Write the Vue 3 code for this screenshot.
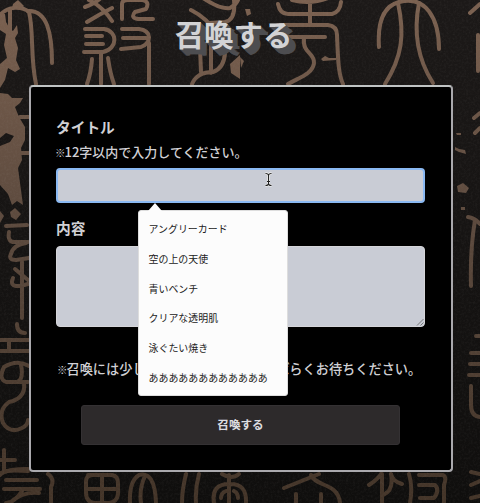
<script setup>
import { ref } from 'vue';

const title = ref('');
const content = ref('');

const histories = [
  'アングリーカード',
  '空の上の天使',
  '青いベンチ',
  'クリアな透明肌',
  '泳ぐたい焼き',
  'ああああああああああああ'
];

// brush strokes of the stone inscription
const strokes = [
  'M0 15 C8 6 22 6 29 12 C34 32 30 56 36 84',
  'M10 10 V34',
  'M28 11 C47 10 52 33 52 63',
  'M85 7 C94 4 98 1 103 -4',
  'M89 0 Q103 7 112 21 M112 8 Q100 14 87 22',
  'M122 19 V4 Q122 0 128 0 H143 Q150 2 146 9 L135 12 Q130 18 138 19 H153',
  'M85 29 H104 C118 31 118 49 103 52 H84 M86 36 H102 M86 44 H103',
  'M122 29 H139 C153 31 151 43 141 47 L121 49 M123 38 H146 M149 43 V84',
  'M101 53 V84 M92 59 Q91 73 87 84 M108 58 Q110 73 114 84',
  'M191 10 Q209 19 216 34 M200 -4 Q220 10 230 8 Q236 5 238 0 M234 0 Q236 20 225 22 L210 23',
  'M200 48 L201 72 M211 45 V73 M192 84 Q197 72 213 72 Q224 68 225 53',
  'M278 4 Q280 14 288 14 H332 Q340 12 341 2 M292 0 Q310 5 328 -2 M310 0 V24 M278 25 H328 Q337 26 337 35 C338 57 338 73 343 84',
  'M284 37 H325 M304 38 C302 53 315 53 314 63 C313 74 298 78 288 84',
  'M379 47 C377 18 386 3 404 1 C425 -2 439 17 439 49',
  'M398 3 C405 35 402 57 385 84 M419 3 C412 39 422 66 433 83',
  'M480 4 L470 13 M478 35 V71',
  'M20 117 H29 M21 153 H29',
  'M6 226 L27 225 M9 232 Q7 243 16 242 H28 M26 243 Q13 245 11 254 Q8 260 16 260 L29 258',
  'M13 278 Q9 287 20 286 L28 284 M15 269 L28 280 M22 262 V318 M17 324 Q17 333 25 333',
  'M0 340 H29 M0 351 H29 M9 340 V351',
  'M29 366 Q17 359 4 367 Q-2 379 6 382 H17 Q24 379 21 365 M28 382 H17 M24 383 Q26 398 9 402 Q-2 410 3 423 Q10 434 22 428 Q28 425 28 420',
  'M0 460 H15 M4 450 V470 M0 475 Q5 469 28 469',
  'M480 113 L474 118 M480 128 L475 133 M468 217 Q475 218 480 224 M475 220 Q470 250 471 286',
  'M476 336 H480 M471 353 H480 M470 364 H480 M469 375 H480 M471 386 V405 Q471 416 480 417',
  'M0 474 Q4 469 28 471 M6 480 H37 M4 489 H40 M22 491 Q14 503 6 503 M10 503 Q22 491 39 493',
  'M48 474 Q55 479 51 487 V503',
  'M88 475 H112 Q118 476 118 483 V494 Q117 502 109 503 H94 Q86 502 86 492 V481 Q86 476 92 475 M86 489 H118 M102 475 V503',
  'M130 503 Q129 481 139 475 Q155 471 156 503 M145 476 Q139 489 141 503',
  'M186 474 Q182 490 182 503 M199 474 Q195 489 196 503',
  'M222 474 Q232 480 239 474 M214 503 Q211 484 229 484 Q247 483 246 503 M229 475 V503 M221 498 Q221 493 226 491 M238 498 Q238 493 234 491',
  'M284 488 L319 474 M311 475 C315 487 338 482 340 503 M296 494 V503 M321 494 V503',
  'M369 485 Q378 479 381 474 M382 474 V503 M402 484 Q392 481 391 474 Q394 491 383 495',
  'M409 474 Q413 487 410 503 M419 475 H443 Q447 477 444 485 V503 M419 485 H435 Q440 490 434 498 H420',
  'M471 472 L480 474 M471 485 L480 481 M471 498 L480 496'
];
</script>

<template>
  <main class="page">
    <svg class="stone" viewBox="0 0 480 503" aria-hidden="true">
      <defs>
        <linearGradient id="ink" gradientUnits="userSpaceOnUse" x1="0" y1="0" x2="0" y2="503">
          <stop offset="0" stop-color="#7b6150" />
          <stop offset="0.45" stop-color="#5b493d" />
          <stop offset="1" stop-color="#433428" />
        </linearGradient>
        <linearGradient id="rock" x1="0" y1="0" x2="0" y2="1">
          <stop offset="0" stop-color="#1c1918" />
          <stop offset="1" stop-color="#0f0e0d" />
        </linearGradient>
        <filter id="grain" x="0" y="0" width="100%" height="100%">
          <feTurbulence type="fractalNoise" baseFrequency="0.45" numOctaves="3" seed="4" />
          <feColorMatrix values="0 0 0 0 0.5  0 0 0 0 0.47  0 0 0 0 0.45  0.9 0 0 0 -0.36" />
        </filter>
      </defs>
      <rect width="480" height="503" fill="url(#rock)" />
      <g fill="none" stroke="url(#ink)" stroke-width="4" stroke-linecap="round" stroke-linejoin="round">
        <path v-for="(d, i) in strokes" :key="i" :d="d" />
      </g>
      <!-- worn patches -->
      <g fill="url(#ink)">
        <path d="M0 12 L5 14 L6 22 L10 29 L13 31 L17 25 L18 33 L15 38 L18 48 L16 60 L20 69 L15 72 L8 68 L5 80 L0 88 V64 L7 58 L4 45 L6 34 L0 30Z" />
        <path d="M13 4 L18 0 L24 6 L20 10 L12 8Z" />
        <path d="M0 93 L8 94 L12 98 L23 98 L20 103 L15 107 L19 117 L25 127 L25 140 L21 148 L22 160 L18 168 L23 205 L17 201 L12 205 L8 194 L0 185 V146 L10 142 L14 136 L6 133 L0 138Z" />
        <path d="M10 212 L15 208 L21 214 L16 220 L11 217Z" />
        <path d="M0 211 L4 216 L0 223Z" />
        <path d="M230 64 L240 55 V79 L231 73Z" />
        <path d="M245 9 L250 9 L251 14 L247 16Z" />
        <path d="M240 57 L244 61 L241 68Z" />
        <path d="M321 59 L325 56 L329 58 L337 58 L336 60 L323 61Z" />
        <path d="M455 147 L459 149 L465 150 L466 154 L459 152 L455 150Z" />
        <path d="M457 186 L463 183 L469 188 L466 193 L458 192Z" />
        <path d="M461 207 L465 207 L465 210 L461 210Z" />
        <path d="M456 133 L461 133 L461 135 L457 135Z" />
      </g>
      <rect width="480" height="503" filter="url(#grain)" opacity="0.14" />
    </svg>

    <h1 class="page-title">召喚する</h1>

    <form class="card" @submit.prevent>
      <label class="label" for="title">タイトル</label>
      <p class="hint"><span class="mark">※</span>12字以内で入力してください。</p>
      <div class="field">
        <input id="title" v-model="title" class="input" type="text" maxlength="12" autocomplete="off" />
        <ul class="suggest">
          <li v-for="item in histories" :key="item" @click="title = item">{{ item }}</li>
        </ul>
        <svg class="cursor" viewBox="0 0 9 15" aria-hidden="true">
          <path class="cursor-edge" d="M1.5 1.5 Q4.5 1.5 4.5 3.5 Q4.5 1.5 7.5 1.5 M4.5 3 V12 M1.5 13.5 Q4.5 13.5 4.5 11.5 Q4.5 13.5 7.5 13.5 M3 9.5 H6" />
          <path class="cursor-line" d="M1.5 1.5 Q4.5 1.5 4.5 3.5 Q4.5 1.5 7.5 1.5 M4.5 3 V12 M1.5 13.5 Q4.5 13.5 4.5 11.5 Q4.5 13.5 7.5 13.5 M3 9.5 H6" />
        </svg>
      </div>

      <label class="label label-content" for="content">内容</label>
      <div class="area">
        <textarea id="content" v-model="content" class="textarea"></textarea>
        <svg class="grip" viewBox="0 0 8 8" aria-hidden="true">
          <path d="M1 7.5 L7.5 1 M4.5 7.5 L7.5 4.5" />
        </svg>
      </div>

      <p class="notice"><span class="mark">※</span>召喚には少し時間がかかります。しばらくお待ちください。</p>
      <button class="submit" type="submit">召喚する</button>
    </form>
  </main>
</template>

<style>
body {
  background: #151312;
  overflow: hidden;
}
</style>

<style scoped>
.page {
  position: relative;
  box-sizing: border-box;
  height: 503px;
  padding: 11px 27px 0 29px;
  overflow: hidden;
  color: #d0d0d4;
  font-family: "Noto Sans CJK JP", sans-serif;
}

.stone {
  position: absolute;
  inset: 0;
  width: 480px;
  height: 503px;
}

.page-title {
  position: relative;
  margin: 0 0 30px;
  padding-right: 15px;
  color: #d3d3d5;
  font-size: 29.4px;
  font-weight: 700;
  line-height: 44px;
  text-align: center;
  text-shadow: 1px 1px #4d4d50, 2px 2px #4d4d50, 3px 3px #4d4d50, 4px 4px #4d4d50,
    5px 5px #4d4d50, 6px 6px #4d4d50, 7px 6px #4d4d50;
}

.card {
  position: relative;
  box-sizing: border-box;
  height: 387px;
  padding: 29px 26px 0 25px;
  background: #000;
  border: 2px solid #aaa9ad;
  border-top-color: #c0c4c4;
  border-radius: 4px;
}

.label {
  display: block;
  font-size: 14.7px;
  font-weight: 700;
  line-height: 22px;
}

.hint,
.notice {
  margin: 0;
  font-size: 13px;
  font-weight: 500;
  line-height: 20px;
  white-space: nowrap;
}

.hint {
  margin-top: 4px;
}

.mark {
  display: inline-block;
  width: 8.5px;
  font-size: 10.5px;
  font-weight: 700;
  text-indent: -1px;
}

.field {
  position: relative;
  margin-top: 5px;
}

.input,
.textarea {
  display: block;
  box-sizing: border-box;
  width: 100%;
  margin: 0;
  background: #c9ccd5;
  border: 1px solid #d5d5d9;
  border-radius: 4px;
  outline: none;
  font: inherit;
  font-size: 13px;
}

.input {
  height: 35px;
  padding: 0 8px;
  border: 2px solid #8bb9f2;
}

.cursor {
  position: absolute;
  top: 4px;
  left: 208px;
  width: 9px;
  height: 15px;
  fill: none;
}

.cursor-edge {
  stroke: #f4f4f4;
  stroke-width: 2.6;
}

.cursor-line {
  stroke: #222;
  stroke-width: 1.1;
}

.suggest {
  position: absolute;
  z-index: 2;
  top: 42px;
  left: 82px;
  box-sizing: border-box;
  width: 150px;
  height: 186px;
  margin: 0;
  padding: 3px 9.5px;
  background: #fcfcfc;
  border: 1px solid #ddd;
  border-radius: 3px;
  color: #222;
  font-size: 9.95px;
  list-style: none;
}

.suggest::before {
  content: "";
  position: absolute;
  top: -8px;
  left: 9px;
  border: 7px solid transparent;
  border-top: 0;
  border-bottom: 8px solid #fcfcfc;
}

.suggest li {
  line-height: 29.8px;
  white-space: nowrap;
  cursor: default;
}

.label-content {
  margin-top: 14px;
}

.area {
  position: relative;
  margin-top: 7px;
}

.textarea {
  height: 81px;
  padding: 8px;
  resize: none;
}

.grip {
  position: absolute;
  right: 1px;
  bottom: 1px;
  width: 8px;
  height: 8px;
  fill: none;
  stroke: #666;
  stroke-width: 0.8;
}

.notice {
  margin-top: 32px;
  padding-left: 2px;
  font-size: 13.2px;
}

.submit {
  display: block;
  width: 319px;
  height: 40px;
  margin: 25px 0 0 25px;
  padding: 0 0 2px;
  background: #2d2a2b;
  border: 1px solid #343133;
  border-radius: 3px;
  color: #dedee1;
  font: inherit;
  font-size: 11.6px;
  font-weight: 700;
}
</style>
